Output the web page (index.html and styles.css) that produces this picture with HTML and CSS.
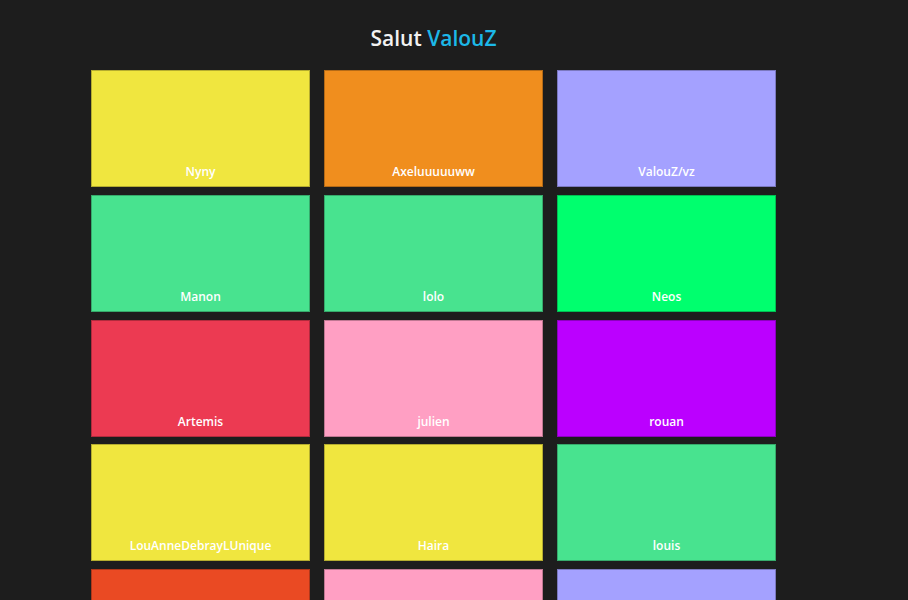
FILE: index.html
```html
<!DOCTYPE html>
<html lang="fr">
<head>
<meta charset="utf-8">
<title>Salut ValouZ</title>
<link rel="stylesheet" href="styles.css">
</head>
<body>
<main class="page">
  <h1 class="title">Salut <span class="accent">ValouZ</span></h1>
  <div class="grid">
    <div class="card c-yellow"><span class="name">Nyny</span></div>
    <div class="card c-orange"><span class="name">Axeluuuuuww</span></div>
    <div class="card c-lavender"><span class="name">ValouZ/vz</span></div>
    <div class="card c-green"><span class="name">Manon</span></div>
    <div class="card c-green"><span class="name">lolo</span></div>
    <div class="card c-neon"><span class="name">Neos</span></div>
    <div class="card c-red"><span class="name">Artemis</span></div>
    <div class="card c-pink"><span class="name">julien</span></div>
    <div class="card c-purple"><span class="name">rouan</span></div>
    <div class="card c-yellow"><span class="name">LouAnneDebrayLUnique</span></div>
    <div class="card c-yellow"><span class="name">Haira</span></div>
    <div class="card c-green"><span class="name">louis</span></div>
    <div class="card c-redorange"><span class="name"></span></div>
    <div class="card c-pink"><span class="name"></span></div>
    <div class="card c-lavender"><span class="name"></span></div>
  </div>
</main>
</body>
</html>
```
FILE: styles.css
```css
html, body {
  margin: 0;
  padding: 0;
  background: #1d1d1d;
  height: 100%;
  overflow: hidden;
}
body {
  font-family: "Open Sans", "Noto Sans", sans-serif;
  color: #ffffff;
}
.page {
  width: 685px;
  margin-left: 91px;
  padding-top: 26px;
}
.title {
  margin: 0 0 20px 0;
  text-align: center;
  font-size: 21px;
  font-weight: 600;
  line-height: 24px;
  color: #f2f2f2;
}
.accent {
  color: #1cb8e8;
}
.grid {
  display: grid;
  grid-template-columns: repeat(3, 219px);
  column-gap: 14px;
  row-gap: 7.8px;
}
.card {
  height: 117px;
  box-sizing: border-box;
  border: 1px solid rgba(0, 0, 0, 0.25);
  display: flex;
  align-items: flex-end;
  justify-content: center;
  padding-bottom: 6px;
}
.name {
  font-size: 12px;
  font-weight: 600;
  line-height: 16px;
  color: #ffffff;
}
.c-yellow { background: #f0e63f; }
.c-orange { background: #f08e1e; }
.c-lavender { background: #a4a1ff; }
.c-green { background: #48e38f; }
.c-neon { background: #00ff6e; }
.c-red { background: #ec3a52; }
.c-pink { background: #ff9fc3; }
.c-purple { background: #bb00ff; }
.c-redorange { background: #ea4a23; }
```
